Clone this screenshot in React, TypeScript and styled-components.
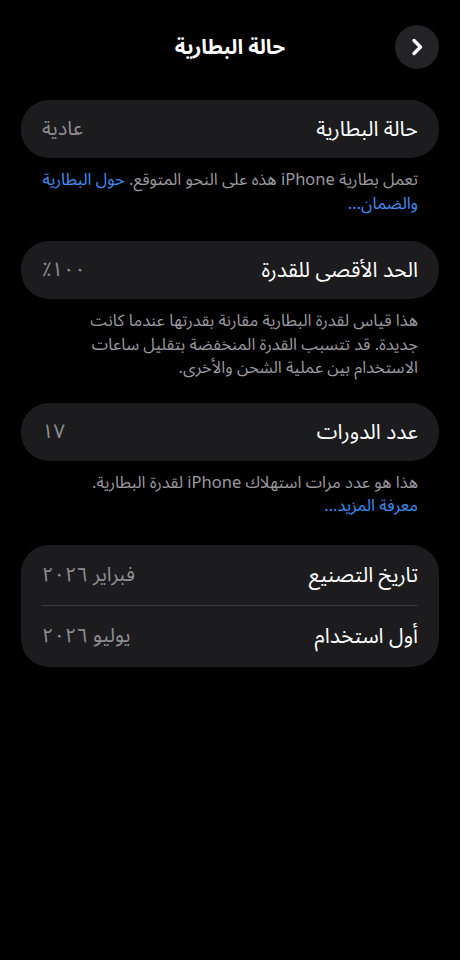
import React from "react";
import styled, { createGlobalStyle } from "styled-components";

const GlobalStyle = createGlobalStyle`
  html, body {
    margin: 0;
    padding: 0;
    background: #000;
  }
  body {
    font-family: "Noto Sans Arabic", "DejaVu Sans", "Noto Sans", sans-serif;
    -webkit-font-smoothing: antialiased;
  }
`;

const Screen = styled.div`
  width: 460px;
  min-height: 960px;
  background: #000;
  direction: rtl;
  color: #fff;
  box-sizing: border-box;
  padding: 25px 21px 0;
`;

const Header = styled.div`
  position: relative;
  height: 44px;
  display: flex;
  align-items: center;
  justify-content: center;
  margin-bottom: 31px;
`;

const Title = styled.h1`
  margin: 0;
  font-size: 20.5px;
  font-weight: 700;
  color: #fff;
`;

const BackButton = styled.button`
  position: absolute;
  right: 0;
  top: 0;
  width: 44px;
  height: 44px;
  border-radius: 50%;
  border: none;
  background: #232325;
  display: flex;
  align-items: center;
  justify-content: center;
  padding: 0;
`;

const Card = styled.div`
  background: #1c1c1e;
  border-radius: 28px;
  padding: 0 21px;
`;

const Row = styled.div<{ $divider?: boolean }>`
  height: ${(p) => (p.$divider ? "60px" : "58px")};
  display: flex;
  align-items: center;
  justify-content: space-between;
  border-bottom: ${(p) => (p.$divider ? "1px solid #38383a" : "none")};
`;

const LastRow = styled(Row)`
  height: 61px;
`;

const Label = styled.span`
  font-size: 21px;
  color: #fff;
`;

const Value = styled.span`
  font-size: 20px;
  color: #8d8d92;
`;

const Footer = styled.p`
  margin: 10px 21px 0;
  font-size: 16.5px;
  line-height: 23.5px;
  color: #9a9a9f;
`;

const Link = styled.a`
  color: #3f8ef0;
  text-decoration: none;
`;

const Section = styled.section<{ $gap: number }>`
  margin-bottom: ${(p) => p.$gap}px;
`;

const Chevron = () => (
  <svg width="20" height="20" viewBox="0 0 20 20">
    <path
      d="M7 3.5 L13.5 10 L7 16.5"
      fill="none"
      stroke="#fff"
      strokeWidth="3.4"
      strokeLinecap="round"
      strokeLinejoin="round"
    />
  </svg>
);

export default function App() {
  return (
    <>
      <GlobalStyle />
      <Screen>
        <Header>
          <BackButton aria-label="رجوع">
            <Chevron />
          </BackButton>
          <Title>حالة البطارية</Title>
        </Header>

        <Section $gap={26}>
          <Card>
            <Row>
              <Label>حالة البطارية</Label>
              <Value>عادية</Value>
            </Row>
          </Card>
          <Footer>
            تعمل بطارية iPhone هذه على النحو المتوقع.{" "}
            <Link>حول البطارية والضمان...</Link>
          </Footer>
        </Section>

        <Section $gap={23}>
          <Card>
            <Row>
              <Label>الحد الأقصى للقدرة</Label>
              <Value dir="ltr">٪١٠٠</Value>
            </Row>
          </Card>
          <Footer>
            هذا قياس لقدرة البطارية مقارنة بقدرتها عندما كانت
            <br />
            جديدة. قد تتسبب القدرة المنخفضة بتقليل ساعات
            <br />
            الاستخدام بين عملية الشحن والأخرى.
          </Footer>
        </Section>

        <Section $gap={27}>
          <Card>
            <Row>
              <Label>عدد الدورات</Label>
              <Value>١٧</Value>
            </Row>
          </Card>
          <Footer>
            هذا هو عدد مرات استهلاك iPhone لقدرة البطارية.
            <br />
            <Link>معرفة المزيد...</Link>
          </Footer>
        </Section>

        <Section $gap={0}>
          <Card>
            <Row $divider>
              <Label>تاريخ التصنيع</Label>
              <Value>فبراير ٢٠٢٦</Value>
            </Row>
            <LastRow>
              <Label>أول استخدام</Label>
              <Value>يوليو ٢٠٢٦</Value>
            </LastRow>
          </Card>
        </Section>
      </Screen>
    </>
  );
}
